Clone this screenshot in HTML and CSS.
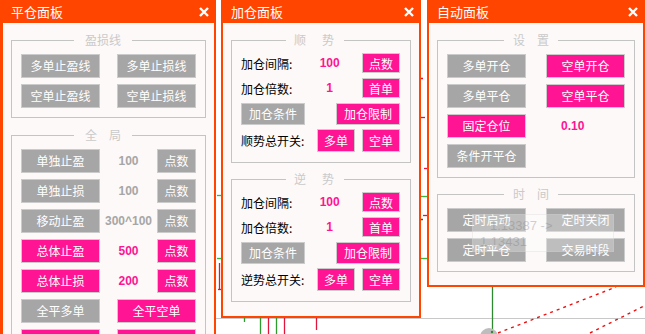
FILE: index.html
```html
<!DOCTYPE html>
<html lang="zh-CN">
<head>
    <meta charset="UTF-8">
    <title>交易面板</title>
    <link rel="stylesheet" href="styles.css">
</head>
<body>
<div class="desk">
    <!-- chart behind the panels -->
    <svg class="chart" width="645" height="334" viewBox="0 0 645 334">
        <line x1="0" y1="318.5" x2="645" y2="318.5" stroke="#c8c8c8"/>
        <g stroke-width="1.3">
            <line x1="244.5" y1="318" x2="244.5" y2="322" stroke="#2f9a2f"/>
            <line x1="260.5" y1="318" x2="260.5" y2="334" stroke="#2f9a2f"/>
            <line x1="268.5" y1="318" x2="268.5" y2="334" stroke="#e2163c"/>
            <line x1="276.5" y1="318" x2="276.5" y2="334" stroke="#2f9a2f"/>
            <line x1="284.5" y1="318" x2="284.5" y2="334" stroke="#e2163c"/>
            <line x1="316.5" y1="318" x2="316.5" y2="330" stroke="#e2163c"/>
            <line x1="219.5" y1="263" x2="219.5" y2="290" stroke="#e2163c"/>
            <line x1="217" y1="195.5" x2="221" y2="195.5" stroke="#3cb43c"/>
            <line x1="217" y1="258.5" x2="221" y2="258.5" stroke="#3cb43c"/>
            <line x1="218" y1="289.5" x2="221" y2="289.5" stroke="#e2163c"/>
            <line x1="421" y1="78.5" x2="423" y2="78.5" stroke="#e2163c"/>
            <line x1="421" y1="117.5" x2="425" y2="117.5" stroke="#e2163c"/>
            <line x1="424" y1="168.5" x2="427" y2="168.5" stroke="#e2163c"/>
            <line x1="421" y1="196.5" x2="427" y2="196.5" stroke="#3cb43c"/>
            <line x1="423" y1="215.5" x2="427" y2="215.5" stroke="#e2163c"/>
            <line x1="421" y1="219.5" x2="423" y2="219.5" stroke="#2a6a2a"/>
            <line x1="421" y1="258.5" x2="427" y2="258.5" stroke="#3cb43c"/>
            <line x1="492.5" y1="286" x2="492.5" y2="334" stroke="#2f8a2f"/>
        </g>
        <circle cx="489" cy="337" r="9" fill="#bdbdbd"/>
        <circle cx="492" cy="332" r="1.2" fill="#2f8a2f"/>
        <g stroke="#f01010" stroke-width="1.4" stroke-dasharray="3 4">
            <line x1="498" y1="333" x2="616" y2="287"/>
            <line x1="590" y1="333" x2="646" y2="305"/>
        </g>
    </svg>

    <div class="panels">
        <!-- 平仓面板 -->
        <div class="panel panel-close">
            <div class="panel-title">
                <span>平仓面板</span>
                <svg class="x" width="10" height="10" viewBox="0 0 10 10"><path d="M1 1L9 9M9 1L1 9" stroke="#fff" stroke-width="2.4"/></svg>
            </div>
            <div class="panel-body">
                <fieldset class="group">
                    <legend class="legend lg-close"><span class="ch">盈损线</span></legend>
                    <div class="stack">
                        <div class="line">
                            <button class="btn gray">多单止盈线</button>
                            <button class="btn gray">多单止损线</button>
                        </div>
                        <div class="line">
                            <button class="btn gray">空单止盈线</button>
                            <button class="btn gray">空单止损线</button>
                        </div>
                    </div>
                </fieldset>
                <fieldset class="group">
                    <legend class="legend lg-close"><span class="ch">全</span><span class="ch">局</span></legend>
                    <div class="stack">
                        <div class="line">
                            <button class="btn gray">单独止盈</button>
                            <span class="val t-gray">100</span>
                            <button class="btn gray narrow">点数</button>
                        </div>
                        <div class="line">
                            <button class="btn gray">单独止损</button>
                            <span class="val t-gray">100</span>
                            <button class="btn gray narrow">点数</button>
                        </div>
                        <div class="line">
                            <button class="btn gray">移动止盈</button>
                            <span class="val t-gray">300^100</span>
                            <button class="btn gray narrow">点数</button>
                        </div>
                        <div class="line">
                            <button class="btn pink">总体止盈</button>
                            <span class="val t-pink">500</span>
                            <button class="btn pink narrow">点数</button>
                        </div>
                        <div class="line">
                            <button class="btn pink">总体止损</button>
                            <span class="val t-pink">200</span>
                            <button class="btn pink narrow">点数</button>
                        </div>
                        <div class="line">
                            <button class="btn gray">全平多单</button>
                            <button class="btn pink">全平空单</button>
                        </div>
                        <div class="line">
                            <button class="btn pink"></button>
                            <button class="btn pink"></button>
                        </div>
                    </div>
                </fieldset>
            </div>
        </div>

        <!-- 加仓面板 -->
        <div class="panel panel-add">
            <div class="panel-title">
                <span>加仓面板</span>
                <svg class="x" width="10" height="10" viewBox="0 0 10 10"><path d="M1 1L9 9M9 1L1 9" stroke="#fff" stroke-width="2.4"/></svg>
            </div>
            <div class="panel-body">
                <fieldset class="group">
                    <legend class="legend lg-add"><span class="ch">顺</span><span class="ch">势</span></legend>
                    <div class="add-stack">
                        <div class="add-row">
                            <span class="label">加仓间隔:</span>
                            <span class="val t-pink">100</span>
                            <button class="btn pink mini">点数</button>
                        </div>
                        <div class="add-row">
                            <span class="label">加仓倍数:</span>
                            <span class="val t-pink">1</span>
                            <button class="btn pink mini">首单</button>
                        </div>
                        <div class="add-row tall">
                            <button class="btn gray half">加仓条件</button>
                            <button class="btn pink half">加仓限制</button>
                        </div>
                        <div class="add-row taller">
                            <span class="label grow">顺势总开关:</span>
                            <button class="btn pink mini">多单</button>
                            <button class="btn pink mini">空单</button>
                        </div>
                    </div>
                </fieldset>
                <fieldset class="group">
                    <legend class="legend lg-add"><span class="ch">逆</span><span class="ch">势</span></legend>
                    <div class="add-stack">
                        <div class="add-row">
                            <span class="label">加仓间隔:</span>
                            <span class="val t-pink">100</span>
                            <button class="btn pink mini">点数</button>
                        </div>
                        <div class="add-row">
                            <span class="label">加仓倍数:</span>
                            <span class="val t-pink">1</span>
                            <button class="btn pink mini">首单</button>
                        </div>
                        <div class="add-row tall">
                            <button class="btn gray half">加仓条件</button>
                            <button class="btn pink half">加仓限制</button>
                        </div>
                        <div class="add-row taller">
                            <span class="label grow">逆势总开关:</span>
                            <button class="btn pink mini">多单</button>
                            <button class="btn pink mini">空单</button>
                        </div>
                    </div>
                </fieldset>
            </div>
        </div>

        <!-- 自动面板 -->
        <div class="panel panel-auto">
            <div class="panel-title">
                <span>自动面板</span>
                <svg class="x" width="10" height="10" viewBox="0 0 10 10"><path d="M1 1L9 9M9 1L1 9" stroke="#fff" stroke-width="2.4"/></svg>
            </div>
            <div class="panel-body">
                <fieldset class="group">
                    <legend class="legend lg-auto"><span class="ch">设</span><span class="ch">置</span></legend>
                    <div class="stack">
                        <div class="line">
                            <button class="btn gray">多单开仓</button>
                            <button class="btn pink">空单开仓</button>
                        </div>
                        <div class="line">
                            <button class="btn gray">多单平仓</button>
                            <button class="btn pink">空单平仓</button>
                        </div>
                        <div class="line start">
                            <button class="btn pink">固定仓位</button>
                            <span class="lot t-pink">0.10</span>
                        </div>
                        <div class="line start">
                            <button class="btn gray">条件开平仓</button>
                        </div>
                    </div>
                </fieldset>
                <fieldset class="group">
                    <legend class="legend lg-auto"><span class="ch">时</span><span class="ch">间</span></legend>
                    <div class="stack">
                        <div class="line">
                            <button class="btn gray">定时启动</button>
                            <button class="btn gray">定时关闭</button>
                        </div>
                        <div class="line">
                            <button class="btn gray">定时平仓</button>
                            <button class="btn gray">交易时段</button>
                        </div>
                    </div>
                </fieldset>
            </div>
            <!-- chart tooltip showing through -->
            <div class="tip">
                <div class="tip-a">1.13387 -&gt;</div>
                <div>1.13431</div>
            </div>
        </div>
    </div>
</div>
</body>
</html>
```

FILE: styles.css
```css
* {
    box-sizing: border-box;
}

html, body {
    margin: 0;
    height: 100%;
    overflow: hidden;
}

body {
    background-color: #fff;
    font-family: "Noto Sans CJK SC", "Liberation Sans", sans-serif;
    font-size: 12px;
}

.desk {
    position: relative;
    width: 645px;
    height: 334px;
    overflow: hidden;
}

.chart {
    position: absolute;
    left: 0;
    top: 0;
}

/* Panels */
.panels {
    position: relative;
    display: flex;
    align-items: flex-start;
}

.panel {
    position: relative;
    background-color: #fdf9f8;
    border: 2px solid #ff4500; /* frame colour */
    border-top: 0;
}

.panel-close {
    width: 216px;
    height: 334px;
    overflow: hidden;
    border-left-width: 3px;
    border-bottom: 0;
}

.panel-add {
    width: 200px;
    margin-left: 5px;
}

.panel-auto {
    width: 218px;
    margin-left: 6px;
}

.panel-title {
    height: 23px;
    background-color: #ff4500;
    color: #fff;
    font-size: 13px;
    line-height: 1;
    display: flex;
    align-items: center;
    justify-content: space-between;
    padding: 0 5px 0 8px;
}

.x {
    display: block;
}

.panel-body {
    padding: 9px 8px 14px 8px;
}

.panel-close .panel-body {
    padding: 9px 8px 0 8px;
}

.panel-auto .panel-body {
    padding-bottom: 13px;
}

/* Group boxes */
.group {
    margin: 0;
    padding: 0;
    min-width: 0;
    border: 1px solid #c4c4c4;
}

.group + .group {
    margin-top: 8px;
}

.panel-close .group + .group {
    margin-top: 9px;
}

.legend {
    padding: 0 11px;
    line-height: 16px;
    font-size: 12px;
    color: #cacaca;
}

.ch + .ch {
    margin-left: 12px;
}

.lg-close {
    margin-left: 62px;
}

.lg-add {
    margin-left: 54px;
    padding: 0 10px 0 8px;
}

.lg-add .ch + .ch {
    margin-left: 16px;
}

.lg-auto {
    margin-left: 66px;
    padding: 0 9px;
}

.stack {
    display: flex;
    flex-direction: column;
    gap: 6px;
    padding: 6px 9px 9px 9px;
}

.line {
    display: flex;
    align-items: center;
    justify-content: space-between;
}

.line.start {
    justify-content: flex-start;
}

/* Buttons */
.btn {
    font-family: inherit;
    font-size: 12px;
    color: #fff;
    width: 79px;
    height: 24px;
    padding: 0;
    border: 1px solid #cbcbcb;
    line-height: 22px;
    cursor: pointer;
}

.gray {
    background-color: #a6a6a6;
}

.pink {
    background-color: #ff1493;
}

.narrow {
    width: 39px;
}

.val {
    flex: 1;
    text-align: center;
    font-family: "Liberation Sans", sans-serif;
    font-weight: bold;
    font-size: 12px;
}

.lot {
    margin-left: 35px;
    font-family: "Liberation Sans", sans-serif;
    font-weight: bold;
    font-size: 12px;
}

.t-gray {
    color: #a6a6a6;
}

.t-pink {
    color: #ff1493;
}

/* 加仓面板 rows */
.add-stack {
    display: flex;
    flex-direction: column;
    padding: 5px 10px 10px 9px;
}

.add-row {
    display: flex;
    align-items: center;
    height: 20px;
    margin-bottom: 5px;
}

.add-row.tall {
    height: 22px;
    margin-bottom: 4px;
    justify-content: space-between;
}

.add-row.taller {
    height: 23px;
    margin-bottom: 0;
}

.label {
    color: #000;
    font-size: 12px;
}

.label.grow {
    flex: 1;
}

.add-row .val {
    padding-left: 5px;
}

.mini {
    width: 38px;
    height: 100%;
    line-height: normal;
}

.mini + .mini {
    margin-left: 7px;
}

.half {
    width: 64px;
    height: 22px;
    line-height: 20px;
}

/* tooltip from the chart, drawn over the panel */
.tip {
    position: absolute;
    left: 43px;
    top: 214px;
    width: 142px;
    height: 38px;
    padding: 3px 0 0 7px;
    background-color: rgba(255, 255, 255, 0.28);
    border: 1px solid rgba(210, 210, 210, 0.3);
    font-family: "Liberation Sans", sans-serif;
    font-size: 13px;
    line-height: 16px;
    color: rgba(120, 120, 120, 0.35);
}

.tip-a {
    padding-left: 10px;
}
```
